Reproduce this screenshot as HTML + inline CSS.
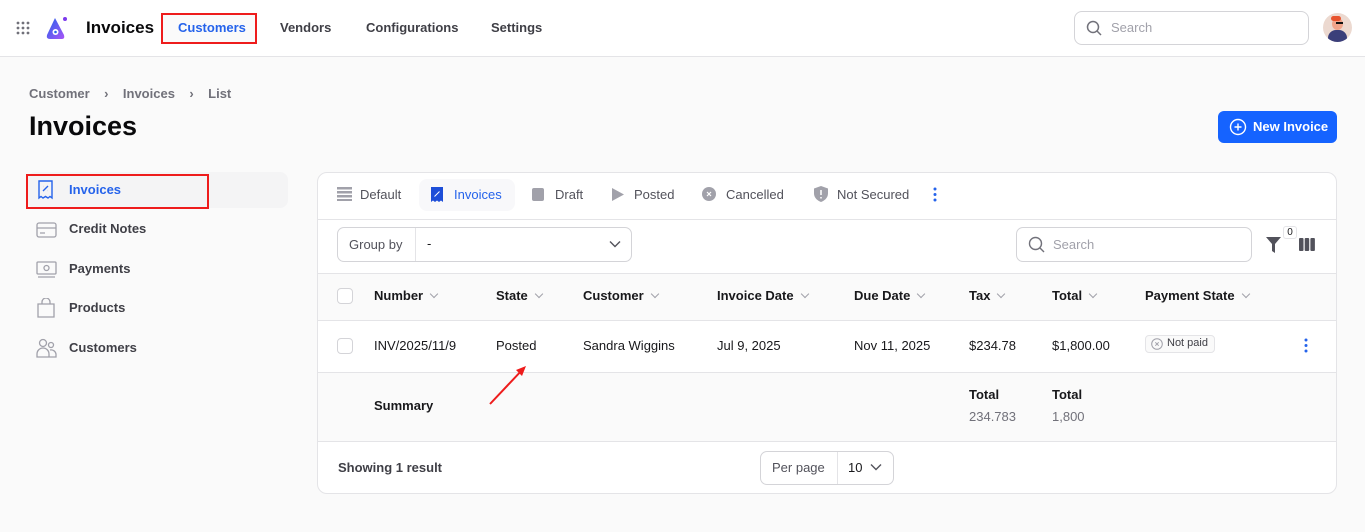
<!DOCTYPE html>
<html><head><meta charset="utf-8"><style>
*{box-sizing:border-box;margin:0;padding:0}
body{width:1365px;height:532px;background:#fafafa;font-family:"Liberation Sans",Arial,sans-serif;font-size:13px;color:#18181b;position:relative;overflow:hidden}
.a{position:absolute;white-space:nowrap}
.top{position:absolute;left:0;top:0;width:1365px;height:57px;background:#fff;border-bottom:1px solid #e4e4e7}
.nav{font-size:13px;color:#3f3f46;font-weight:bold}
.card{position:absolute;left:317px;top:172px;width:1020px;height:322px;background:#fff;border:1px solid #e4e4e7;border-radius:10px;overflow:hidden}
.tab{color:#52525b;font-size:13px}
.th{font-weight:bold;font-size:13px;color:#18181b}
.chev{display:inline-block;width:6px;height:6px;border-right:1.3px solid #a1a1aa;border-bottom:1.3px solid #a1a1aa;transform:rotate(45deg);margin-left:8px;position:relative;top:-3px}
.cb{position:absolute;width:16px;height:16px;border:1px solid #d4d4d8;border-radius:4px;background:#fff}
.side{font-size:13px;color:#3f3f46;font-weight:bold}
</style></head><body>
<div class="top"></div>
<svg class="a" style="left:16px;top:21px" width="14" height="14"><g fill="#71717a"><circle cx="2" cy="2" r="1.4"/><circle cx="7" cy="2" r="1.4"/><circle cx="12" cy="2" r="1.4"/><circle cx="2" cy="7" r="1.4"/><circle cx="7" cy="7" r="1.4"/><circle cx="12" cy="7" r="1.4"/><circle cx="2" cy="12" r="1.4"/><circle cx="7" cy="12" r="1.4"/><circle cx="12" cy="12" r="1.4"/></g></svg>
<svg class="a" style="left:44px;top:15px" width="26" height="26" viewBox="0 0 26 26"><defs><linearGradient id="g" x1="0" y1="0" x2="1" y2="1"><stop offset="0" stop-color="#2563eb"/><stop offset="1" stop-color="#a855f7"/></linearGradient></defs><path d="M11 3 L3 20 Q2 24 6 24 L18 24 Q21 24 20 20 Z" fill="url(#g)"/><circle cx="11.5" cy="17" r="3" fill="#fff"/><circle cx="11.5" cy="17" r="1.3" fill="#2563eb"/><circle cx="21" cy="4" r="2" fill="#7c3aed"/></svg>
<div class="a" style="left:86px;top:18px;font-size:17px;font-weight:bold;color:#09090b">Invoices</div>
<div class="a" style="left:161px;top:13px;width:96px;height:31px;border:2px solid #ee1c1c;background:#fafafa"></div>
<div class="a nav" style="left:178px;top:20px;color:#2563eb">Customers</div>
<div class="a nav" style="left:280px;top:20px">Vendors</div>
<div class="a nav" style="left:366px;top:20px">Configurations</div>
<div class="a nav" style="left:491px;top:20px">Settings</div>
<div class="a" style="left:1074px;top:11px;width:235px;height:34px;border:1px solid #d4d4d8;border-radius:8px;background:#fff"></div>
<svg class="a" style="left:1086px;top:20px" width="16" height="16" fill="none" stroke="#71717a" stroke-width="1.5"><circle cx="7" cy="7" r="5.5"/><path d="M11 11l4 4"/></svg>
<div class="a" style="left:1111px;top:20px;color:#a1a1aa">Search</div>
<div class="a" style="left:1323px;top:13px;width:29px;height:29px;border-radius:50%;background:#ecd9d0;overflow:hidden"><div style="position:absolute;left:5px;top:17px;width:19px;height:14px;border-radius:8px 8px 0 0;background:#3b3f7a"></div><div style="position:absolute;left:9px;top:5px;width:11px;height:12px;border-radius:50%;background:#f0a48a"></div><div style="position:absolute;left:8px;top:3px;width:10px;height:5px;border-radius:4px;background:#e8542f"></div><div style="position:absolute;left:13px;top:9px;width:7px;height:2px;background:#111"></div></div>

<div class="a" style="left:29px;top:86px;color:#71717a;font-weight:bold">Customer&nbsp;&nbsp;&nbsp;&nbsp;›&nbsp;&nbsp;&nbsp;&nbsp;Invoices&nbsp;&nbsp;&nbsp;&nbsp;›&nbsp;&nbsp;&nbsp;&nbsp;List</div>
<div class="a" style="left:29px;top:111px;font-size:27px;font-weight:bold;color:#09090b">Invoices</div>
<div class="a" style="left:1218px;top:111px;width:119px;height:32px;background:#1563ff;border-radius:6px"></div>
<svg class="a" style="left:1229px;top:118px" width="18" height="18" fill="none" stroke="#fff" stroke-width="1.4"><circle cx="9" cy="9" r="7.5"/><path d="M9 5.5v7M5.5 9h7"/></svg>
<div class="a" style="left:1253px;top:119px;color:#fff;font-weight:bold">New Invoice</div>

<div class="a" style="left:27px;top:172px;width:261px;height:36px;background:#f4f4f5;border-radius:8px"></div>
<div class="a" style="left:26px;top:174px;width:183px;height:35px;border:2px solid #ee1c1c"></div>
<svg class="a" style="left:37px;top:180px" width="18" height="20" fill="none" stroke="#2563eb" stroke-width="1.4"><path d="M2 1h13v17l-2-1.5-2 1.5-2.5-1.5L6 18l-2-1.5L2 18z"/><path d="M6 11l5-5M6.5 6.5h.1M10.5 10.5h.1"/></svg>
<div class="a side" style="left:69px;top:182px;color:#2563eb">Invoices</div>
<svg class="a" style="left:36px;top:221px" width="22" height="18" fill="none" stroke="#a1a1aa" stroke-width="1.3"><rect x="1" y="2" width="19" height="14" rx="2"/><path d="M1 7h19M4 12h5"/></svg>
<div class="a side" style="left:69px;top:221px">Credit Notes</div>
<svg class="a" style="left:36px;top:261px" width="22" height="18" fill="none" stroke="#a1a1aa" stroke-width="1.3"><rect x="1" y="1" width="19" height="12" rx="1"/><circle cx="10.5" cy="7" r="2.5"/><path d="M2 16h17"/></svg>
<div class="a side" style="left:69px;top:261px">Payments</div>
<svg class="a" style="left:37px;top:298px" width="18" height="20" fill="none" stroke="#a1a1aa" stroke-width="1.3"><path d="M1 6h16v13H1zM5 6V4a4 4 0 018 0v2"/></svg>
<div class="a side" style="left:69px;top:300px">Products</div>
<svg class="a" style="left:36px;top:338px" width="22" height="20" fill="none" stroke="#a1a1aa" stroke-width="1.3"><circle cx="7" cy="5" r="3.5"/><circle cx="15" cy="7" r="2.5"/><path d="M1 19v-3a6 6 0 0112 0v3zM14 12a5 5 0 016 4v3h-7"/></svg>
<div class="a side" style="left:69px;top:340px">Customers</div>

<div class="card">
 <div class="a" style="left:0;top:46px;width:1020px;border-top:1px solid #e4e4e7"></div>
 <div class="a" style="left:0;top:100px;width:1020px;height:48px;background:#fafafa;border-top:1px solid #e4e4e7;border-bottom:1px solid #e4e4e7"></div>
 <div class="a" style="left:0;top:199px;width:1020px;height:70px;background:#fafafa;border-top:1px solid #e4e4e7;border-bottom:1px solid #e4e4e7"></div>
</div>
<svg class="a" style="left:337px;top:187px" width="15" height="14" fill="#a1a1aa"><rect y="0" width="15" height="2.5"/><rect y="4" width="15" height="2.5"/><rect y="8" width="15" height="2.5"/><rect y="12" width="15" height="2"/></svg>
<div class="a tab" style="left:360px;top:187px">Default</div>
<div class="a" style="left:419px;top:179px;width:96px;height:32px;background:#f8f8fa;border-radius:8px"></div>
<svg class="a" style="left:431px;top:187px" width="12" height="15"><path d="M0 0h12v15l-2-1.5-2 1.5-2-1.5-2 1.5-2-1.5L0 15z" fill="#1d4ed8"/><path d="M3.5 9.5l5-5" stroke="#fff" stroke-width="1"/></svg>
<div class="a tab" style="left:454px;top:187px;color:#2563eb">Invoices</div>
<div class="a" style="left:532px;top:188px;width:12px;height:13px;background:#a1a1aa;border-radius:2px"></div>
<div class="a tab" style="left:555px;top:187px">Draft</div>
<svg class="a" style="left:612px;top:188px" width="12" height="13"><path d="M0 0l12 6.5L0 13z" fill="#a1a1aa"/></svg>
<div class="a tab" style="left:634px;top:187px">Posted</div>
<svg class="a" style="left:702px;top:187px" width="14" height="14"><circle cx="7" cy="7" r="7" fill="#a1a1aa"/><path d="M5 5l4 4M9 5l-4 4" stroke="#fff" stroke-width="1.2"/></svg>
<div class="a tab" style="left:726px;top:187px">Cancelled</div>
<svg class="a" style="left:814px;top:186px" width="14" height="16"><path d="M7 0l7 2.5v5C14 12 10 15 7 16 4 15 0 12 0 7.5v-5z" fill="#a1a1aa"/><path d="M7 4v5M7 11v1.5" stroke="#fff" stroke-width="1.5"/></svg>
<div class="a tab" style="left:837px;top:187px">Not Secured</div>
<svg class="a" style="left:933px;top:187px" width="4" height="15" fill="#2563eb"><circle cx="2" cy="2" r="1.5"/><circle cx="2" cy="7.5" r="1.5"/><circle cx="2" cy="13" r="1.5"/></svg>

<div class="a" style="left:337px;top:227px;width:295px;height:35px;border:1px solid #d4d4d8;border-radius:7px;background:#fff"></div>
<div class="a" style="left:415px;top:228px;height:33px;border-left:1px solid #e4e4e7"></div>
<div class="a" style="left:349px;top:237px;color:#52525b">Group by</div>
<div class="a" style="left:427px;top:236px">-</div>
<svg class="a" style="left:609px;top:240px" width="12" height="8" fill="none" stroke="#52525b" stroke-width="1.4"><path d="M1 1.5l5 5 5-5"/></svg>
<div class="a" style="left:1016px;top:227px;width:236px;height:35px;border:1px solid #d4d4d8;border-radius:7px;background:#fff"></div>
<svg class="a" style="left:1028px;top:236px" width="17" height="17" fill="none" stroke="#71717a" stroke-width="1.4"><circle cx="7.5" cy="7.5" r="6"/><path d="M12 12l4 4"/></svg>
<div class="a" style="left:1053px;top:237px;color:#a1a1aa">Search</div>
<svg class="a" style="left:1266px;top:237px" width="15" height="16"><path d="M0 0h15L9 7v9L6 14V7z" fill="#52525b"/></svg>
<div class="a" style="left:1283px;top:226px;width:14px;height:13px;border:1px solid #e4e4e7;border-radius:3px;background:#fff;font-size:10px;text-align:center;line-height:11px">0</div>
<svg class="a" style="left:1299px;top:238px" width="16" height="13" fill="#52525b"><rect x="0" y="0" width="4.5" height="13" rx="1"/><rect x="5.7" y="0" width="4.5" height="13" rx="1"/><rect x="11.4" y="0" width="4.5" height="13" rx="1"/></svg>

<div class="cb" style="left:337px;top:288px"></div>
<div class="a th" style="left:374px;top:288px">Number<span class="chev"></span></div>
<div class="a th" style="left:496px;top:288px">State<span class="chev"></span></div>
<div class="a th" style="left:583px;top:288px">Customer<span class="chev"></span></div>
<div class="a th" style="left:717px;top:288px">Invoice Date<span class="chev"></span></div>
<div class="a th" style="left:854px;top:288px">Due Date<span class="chev"></span></div>
<div class="a th" style="left:969px;top:288px">Tax<span class="chev"></span></div>
<div class="a th" style="left:1052px;top:288px">Total<span class="chev"></span></div>
<div class="a th" style="left:1145px;top:288px">Payment State<span class="chev"></span></div>

<div class="cb" style="left:337px;top:338px"></div>
<div class="a" style="left:374px;top:338px">INV/2025/11/9</div>
<div class="a" style="left:496px;top:338px">Posted</div>
<div class="a" style="left:583px;top:338px">Sandra Wiggins</div>
<div class="a" style="left:717px;top:338px">Jul 9, 2025</div>
<div class="a" style="left:854px;top:338px">Nov 11, 2025</div>
<div class="a" style="left:969px;top:338px">$234.78</div>
<div class="a" style="left:1052px;top:338px">$1,800.00</div>
<div class="a" style="left:1145px;top:335px;width:70px;height:18px;border:1px solid #e4e4e7;border-radius:4px;background:#fafafa"></div>
<svg class="a" style="left:1151px;top:338px" width="12" height="12" fill="none" stroke="#a1a1aa"><circle cx="6" cy="6" r="5.3"/><path d="M4.3 4.3l3.4 3.4M7.7 4.3l-3.4 3.4"/></svg>
<div class="a" style="left:1167px;top:337px;font-size:11px;color:#3f3f46">Not paid</div>
<svg class="a" style="left:1304px;top:338px" width="4" height="15" fill="#2563eb"><circle cx="2" cy="2" r="1.5"/><circle cx="2" cy="7.5" r="1.5"/><circle cx="2" cy="13" r="1.5"/></svg>
<svg class="a" style="left:486px;top:362px" width="42" height="46"><path d="M4 42L38 6" stroke="#ee1c1c" stroke-width="2"/><path d="M40 4l-10 4 6 6z" fill="#ee1c1c"/></svg>

<div class="a th" style="left:374px;top:398px">Summary</div>
<div class="a th" style="left:969px;top:387px">Total</div>
<div class="a" style="left:969px;top:409px;color:#71717a">234.783</div>
<div class="a th" style="left:1052px;top:387px">Total</div>
<div class="a" style="left:1052px;top:409px;color:#71717a">1,800</div>

<div class="a" style="left:338px;top:460px;font-weight:bold;color:#3f3f46">Showing 1 result</div>
<div class="a" style="left:760px;top:451px;width:134px;height:34px;border:1px solid #d4d4d8;border-radius:7px;background:#fff"></div>
<div class="a" style="left:837px;top:452px;height:32px;border-left:1px solid #e4e4e7"></div>
<div class="a" style="left:772px;top:460px;color:#52525b">Per page</div>
<div class="a" style="left:848px;top:460px">10</div>
<svg class="a" style="left:870px;top:463px" width="12" height="8" fill="none" stroke="#52525b" stroke-width="1.4"><path d="M1 1.5l5 5 5-5"/></svg>
</body></html>
